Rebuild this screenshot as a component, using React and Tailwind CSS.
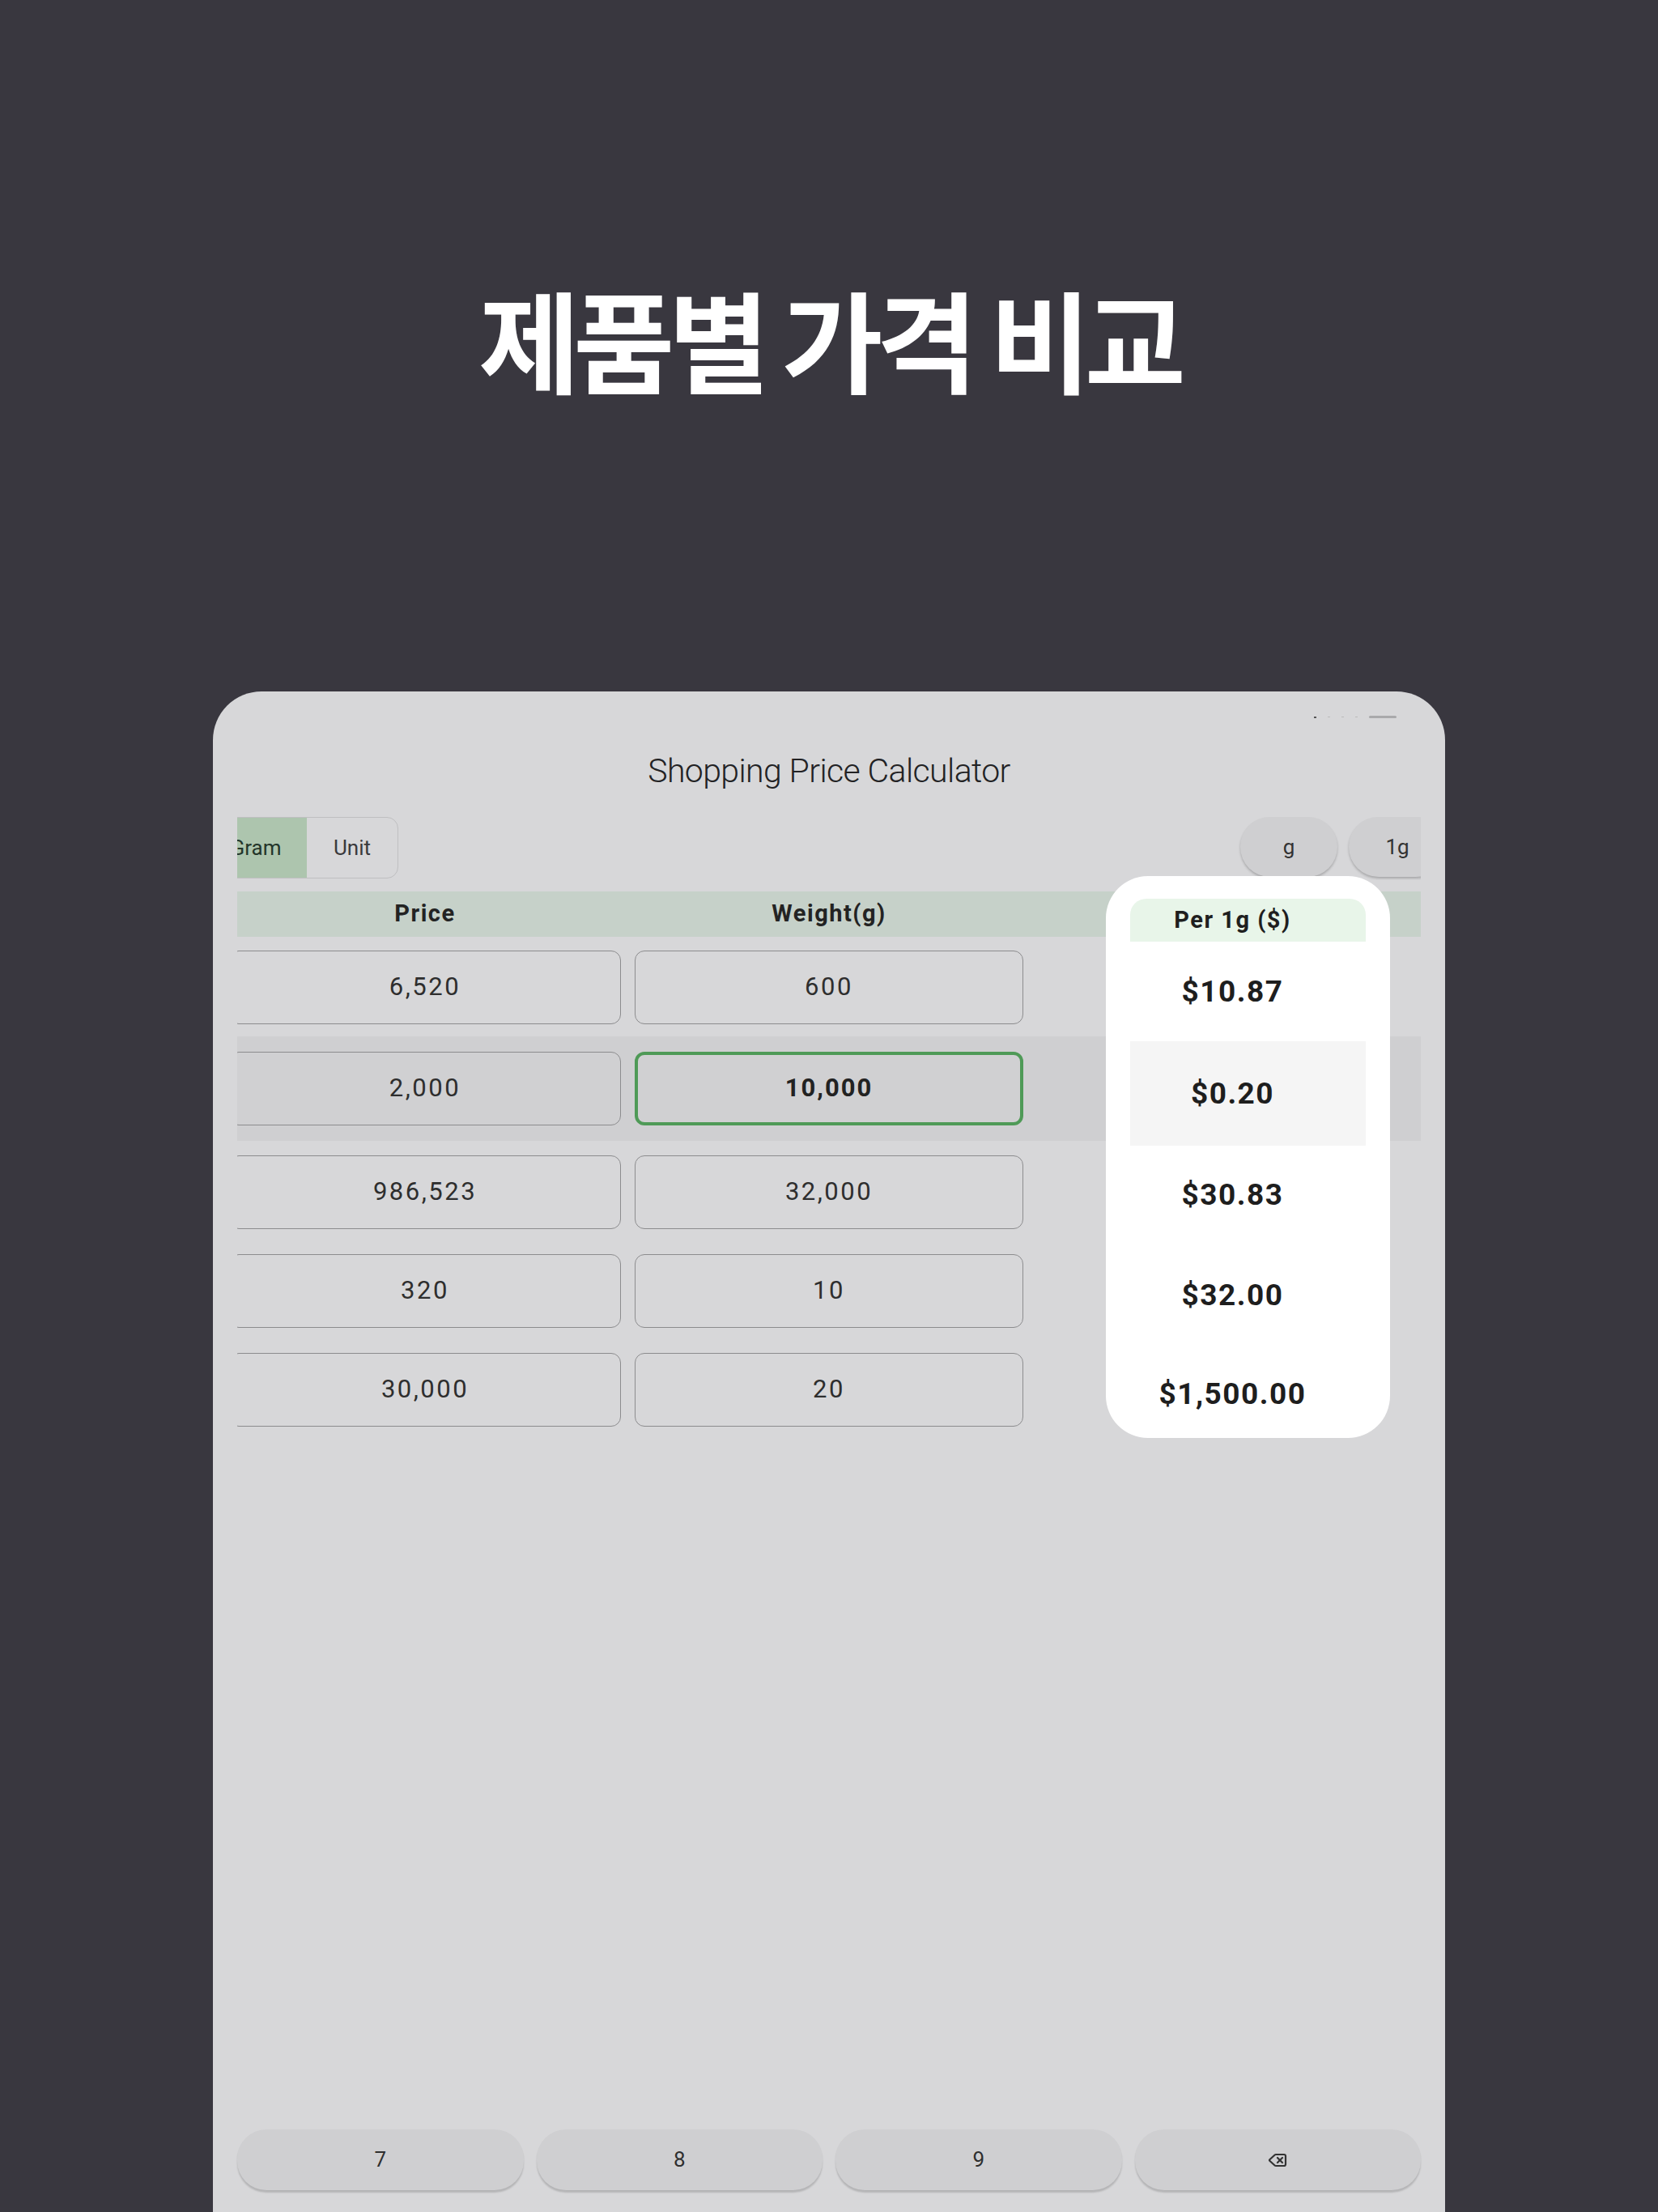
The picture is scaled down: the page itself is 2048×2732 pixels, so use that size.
import { Delete } from 'lucide-react'

const rows = [
  { price: '6,520',   weight: '600',    row: 'h-[123px] pt-[17px]', active: false },
  { price: '2,000',   weight: '10,000', row: 'h-[129px] pt-[19px] bg-[#cfcfd1]', active: true },
  { price: '986,523', weight: '32,000', row: 'h-[122px] pt-[18px]', active: false },
  { price: '320',     weight: '10',     row: 'h-[122px] pt-[18px]', active: false },
  { price: '30,000',  weight: '20',     row: 'h-[122px] pt-[18px]', active: false },
]

const results = [
  { value: '$10.87',    cls: 'h-[123px]' },
  { value: '$0.20',     cls: 'h-[129px] bg-[#f5f5f5]' },
  { value: '$30.83',    cls: 'h-[122px]' },
  { value: '$32.00',    cls: 'h-[126px]' },
  { value: '$1,500.00', cls: 'h-[118px]' },
]

const keys = ['7', '8', '9']

export default function App() {
  return (
    <div className="w-[2048px] min-h-[2732px] bg-[#39373f] flex flex-col items-center font-['Roboto',sans-serif]">
      <h1 className="mt-[347px] h-[140px] leading-[140px] text-white text-[136px] font-bold tracking-[-8px] font-['Noto_Sans_CJK_KR','Noto_Sans',sans-serif]">
        제품별 가격 비교
      </h1>

      {/* tablet frame */}
      <div className="relative mt-[367px] w-[1522px] flex-1 bg-[#d7d7d9] rounded-t-[60px] px-[30px] flex flex-col">
        {/* status bar remnants */}
        <div className="absolute top-[30px] left-[1360px] flex items-center gap-[14px]">
          <span className="w-[3px] h-[2px] bg-[#555]" />
          <span className="w-[3px] h-[1px] bg-[#bbb]" />
          <span className="w-[3px] h-[1px] bg-[#bbb]" />
          <span className="w-[3px] h-[1px] bg-[#bbb]" />
          <span className="w-[34px] h-[3px] bg-[#a9a9ab] rounded-full" />
        </div>

        <div className="mt-[73px] h-[50px] leading-[50px] text-center text-[41px] font-light text-[#222224] tracking-[-0.6px]">
          Shopping Price Calculator
        </div>

        {/* toolbar */}
        <div className="mt-[32px] h-[78px] flex justify-between items-start overflow-hidden">
          <div className="-ml-[41px] h-[76px] flex border-[1.5px] border-[#bfbfc1] rounded-[14px] overflow-hidden text-[26px]">
            <div className="w-[126px] bg-[#adc5ae] text-[#24362a] flex items-center justify-center">Gram</div>
            <div className="w-[112px] text-[#3a3a3c] flex items-center justify-center">Unit</div>
          </div>
          <div className="-mr-[31px] flex gap-[14px]">
            <div className="w-[120px] h-[74px] rounded-full bg-[#cfcfd1] shadow-[0_2px_3px_rgba(0,0,0,0.22)] flex items-center justify-center text-[26px] text-[#333]">g</div>
            <div className="w-[120px] h-[74px] rounded-full bg-[#cfcfd1] shadow-[0_2px_3px_rgba(0,0,0,0.22)] flex items-center justify-center text-[26px] text-[#333]">1g</div>
          </div>
        </div>

        {/* table */}
        <div className="mt-[14px] overflow-hidden">
          <div className="h-[56px] bg-[#c6d1c9] grid grid-cols-[484px_480px_1fr] gap-x-[17px] -ml-[10px] items-center text-[29px] font-bold tracking-[1.5px] text-[#232323]">
            <div className="text-center">Price</div>
            <div className="text-center">Weight(g)</div>
            <div />
          </div>
          {rows.map((r) => (
            <div key={r.price} className={r.row}>
              <div className="grid grid-cols-[484px_480px_1fr] gap-x-[17px] -ml-[10px]">
                <div className={`h-[91px] rounded-[12px] border-[1.5px] border-[#8c8c8e] flex items-center justify-center text-[31px] tracking-[2.5px] text-[#2e2e2e] ${r.active ? 'bg-[#d0d0d2]' : ''}`}>
                  {r.price}
                </div>
                <div className={r.active
                  ? 'h-[91px] rounded-[12px] border-[4px] border-[#4f9a57] bg-[#d0d0d2] flex items-center justify-center text-[31px] font-bold tracking-[2px] text-[#222]'
                  : 'h-[91px] rounded-[12px] border-[1.5px] border-[#8c8c8e] flex items-center justify-center text-[31px] tracking-[2.5px] text-[#2e2e2e]'}>
                  {r.weight}
                </div>
                <div />
              </div>
            </div>
          ))}
        </div>

        {/* result card */}
        <div className="absolute left-[1103px] top-[228px] w-[351px] h-[694px] bg-white rounded-[52px] overflow-hidden px-[30px] pt-[28px]">
          <div className="h-[53px] bg-[#e8f5e9] rounded-t-[20px] flex items-center justify-center pr-[38px] text-[29px] font-bold tracking-[1.5px] text-[#1f1f1f]">
            Per 1g ($)
          </div>
          {results.map((r) => (
            <div key={r.value} className={`${r.cls} flex items-center justify-center pr-[38px] text-[37px] font-bold tracking-[1.5px] text-[#1e1e1e]`}>
              {r.value}
            </div>
          ))}
        </div>

        <div className="flex-1" />

        {/* keypad */}
        <div className="mb-[27px] grid grid-cols-4 gap-[16px]">
          {keys.map((k) => (
            <div key={k} className="h-[75px] rounded-[36px] bg-[#cfcfd1] shadow-[0_3px_2px_rgba(0,0,0,0.16)] flex items-center justify-center text-[26px] text-[#2f2f2f]">
              {k}
            </div>
          ))}
          <div className="h-[75px] rounded-[36px] bg-[#cfcfd1] shadow-[0_3px_2px_rgba(0,0,0,0.16)] flex items-center justify-center text-[#333]">
            <Delete size={24} strokeWidth={2.2} />
          </div>
        </div>
      </div>
    </div>
  )
}
